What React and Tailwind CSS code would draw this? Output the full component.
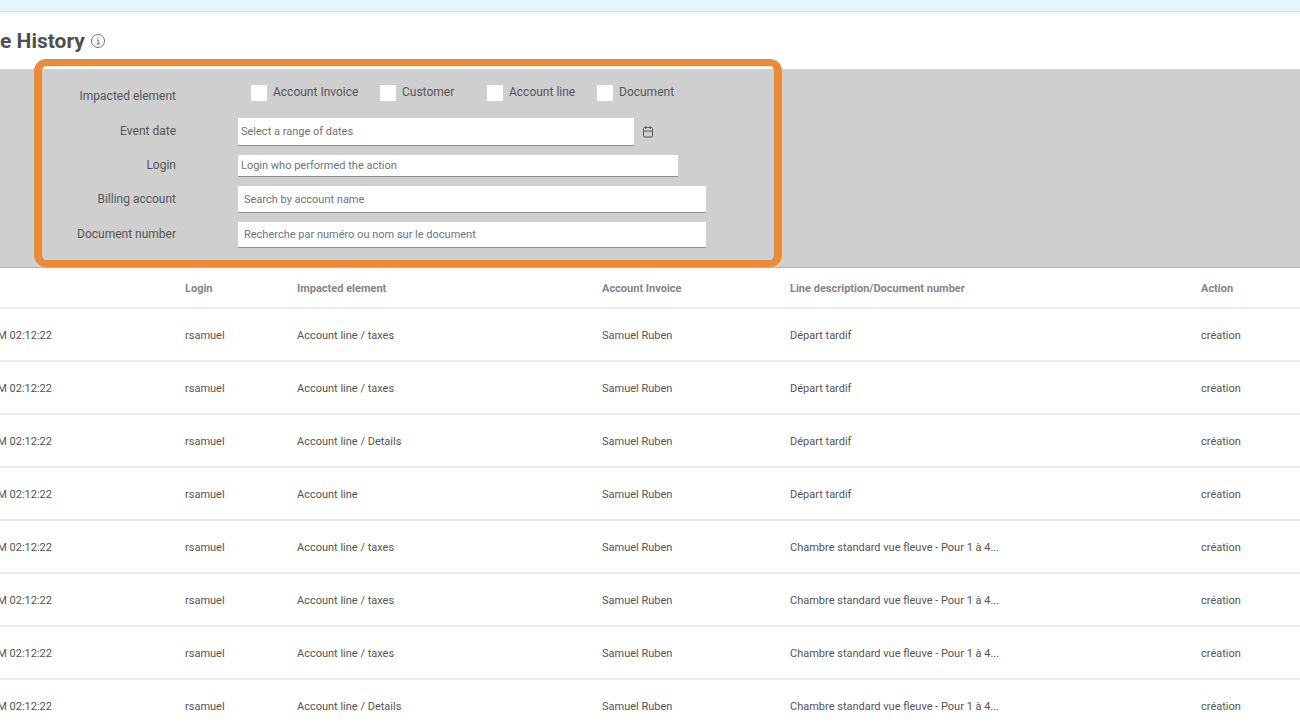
const elements = [
  { label: "Account Invoice", width: "w-[129px]" },
  { label: "Customer", width: "w-[107px]" },
  { label: "Account line", width: "w-[110px]" },
  { label: "Document", width: "" },
];

const LATE = "Départ tardif";
const ROOM = "Chambre standard vue fleuve - Pour 1 à 4...";

const rows = [
  ["Account line / taxes", LATE],
  ["Account line / taxes", LATE],
  ["Account line / Details", LATE],
  ["Account line", LATE],
  ["Account line / taxes", ROOM],
  ["Account line / taxes", ROOM],
  ["Account line / taxes", ROOM],
  ["Account line / Details", ROOM],
];

function InfoIcon() {
  return (
    <svg viewBox="0 0 16 16" className="size-4" fill="none" stroke="#707070" strokeWidth="1" aria-hidden="true">
      <circle cx="8" cy="8" r="6.5" />
      <path d="M6.8 7H8.2V11M6.5 11H9.8" />
      <path d="M7.5 4.9H8.5" strokeWidth="1.2" />
    </svg>
  );
}

function CalendarIcon() {
  return (
    <svg viewBox="0 0 12 13" className="h-[13px] w-3" fill="none" stroke="#5a5a5a" strokeWidth="1" aria-hidden="true">
      <rect x="1.5" y="2.5" width="9" height="9.5" rx="1" />
      <path d="M1.5 6H10.5M3.8 1V4M8.2 1V4" />
    </svg>
  );
}

function Row({ id, label, children }) {
  return (
    <div className="flex items-center gap-[62px]">
      <label htmlFor={id} className="w-44 pb-0.5 text-right leading-4">
        {label}
      </label>
      {children}
    </div>
  );
}

const field =
  "border-b border-[#8f8f8f] bg-white text-[11px] text-[#555] outline-none placeholder:text-[#6c757d]";

export default function App() {
  return (
    <div className="h-screen overflow-hidden bg-white font-['Roboto',sans-serif] text-xs text-[#555]">
      <div className="h-3 border-b border-[#cde8e8] bg-[#e3f6fb]" />
      <div className="h-0.5 bg-[#eef8f9]" />

      <header className="flex h-[55px] items-center gap-[5px] pb-0.5">
        <h1 className="text-[21px] font-bold text-[#505050]">e History</h1>
        <button type="button" aria-label="Information">
          <InfoIcon />
        </button>
      </header>

      <form className="relative flex flex-col gap-[9px] border-b border-[#b3b3b3] bg-[#cfcfcf] pt-4 pb-[19px]">
        <div className="pointer-events-none absolute -top-2.5 bottom-0 left-[34px] w-[748px] rounded-xl border-x-8 border-y-7 border-[#ec8b37]" />
        <fieldset className="flex h-6 gap-[75px]">
          <legend className="float-left w-44 pt-[3px] text-right leading-4">Impacted element</legend>
          <div className="flex">
            {elements.map(({ label, width }) => (
              <label key={label} className={`flex items-start gap-1.5 leading-4 whitespace-nowrap ${width}`}>
                <input type="checkbox" className="size-4 shrink-0 appearance-none rounded-[1px] bg-white checked:bg-[#ec8b37]" />
                <span className="-mt-px">{label}</span>
              </label>
            ))}
          </div>
        </fieldset>
        <Row id="date" label="Event date">
          <div className="flex items-center gap-2">
            <input id="date" type="text" placeholder="Select a range of dates" className={`h-7 w-[396px] px-[3px] ${field}`} />
            <button type="button" aria-label="Open calendar" className="pb-0.5">
              <CalendarIcon />
            </button>
          </div>
        </Row>
        <Row id="login" label="Login">
          <input id="login" type="text" placeholder="Login who performed the action" className={`h-[22px] w-[440px] px-[3px] ${field}`} />
        </Row>
        <Row id="account" label="Billing account">
          <input id="account" type="text" placeholder="Search by account name" className={`h-[27px] w-[468px] px-1.5 ${field}`} />
        </Row>
        <Row id="document" label="Document number">
          <input id="document" type="text" placeholder="Recherche par numéro ou nom sur le document" className={`h-[26px] w-[468px] px-1.5 ${field}`} />
        </Row>
      </form>

      <table className="w-full table-fixed border-separate border-spacing-0 text-left text-[11px]">
        <colgroup>
          <col className="w-[185px]" />
          <col className="w-[112px]" />
          <col className="w-[305px]" />
          <col className="w-[188px]" />
          <col className="w-[411px]" />
          <col />
        </colgroup>
        <thead className="text-[#858585]">
          <tr className="h-[41px] *:border-b-2 *:border-[#ededed] *:pt-1 *:font-bold">
            <td />
            <th>Login</th>
            <th>Impacted element</th>
            <th>Account Invoice</th>
            <th>Line description/Document number</th>
            <th>Action</th>
          </tr>
        </thead>
        <tbody>
          {rows.map(([element, description], i) => (
            <tr key={i} className="h-[53px] *:border-b-2 *:border-[#ededed] *:pt-1">
              <td>
                <div className="flex w-[52px] justify-end overflow-hidden whitespace-nowrap">M 02:12:22</div>
              </td>
              <td>rsamuel</td>
              <td>{element}</td>
              <td>Samuel Ruben</td>
              <td>{description}</td>
              <td>création</td>
            </tr>
          ))}
        </tbody>
      </table>
    </div>
  );
}
